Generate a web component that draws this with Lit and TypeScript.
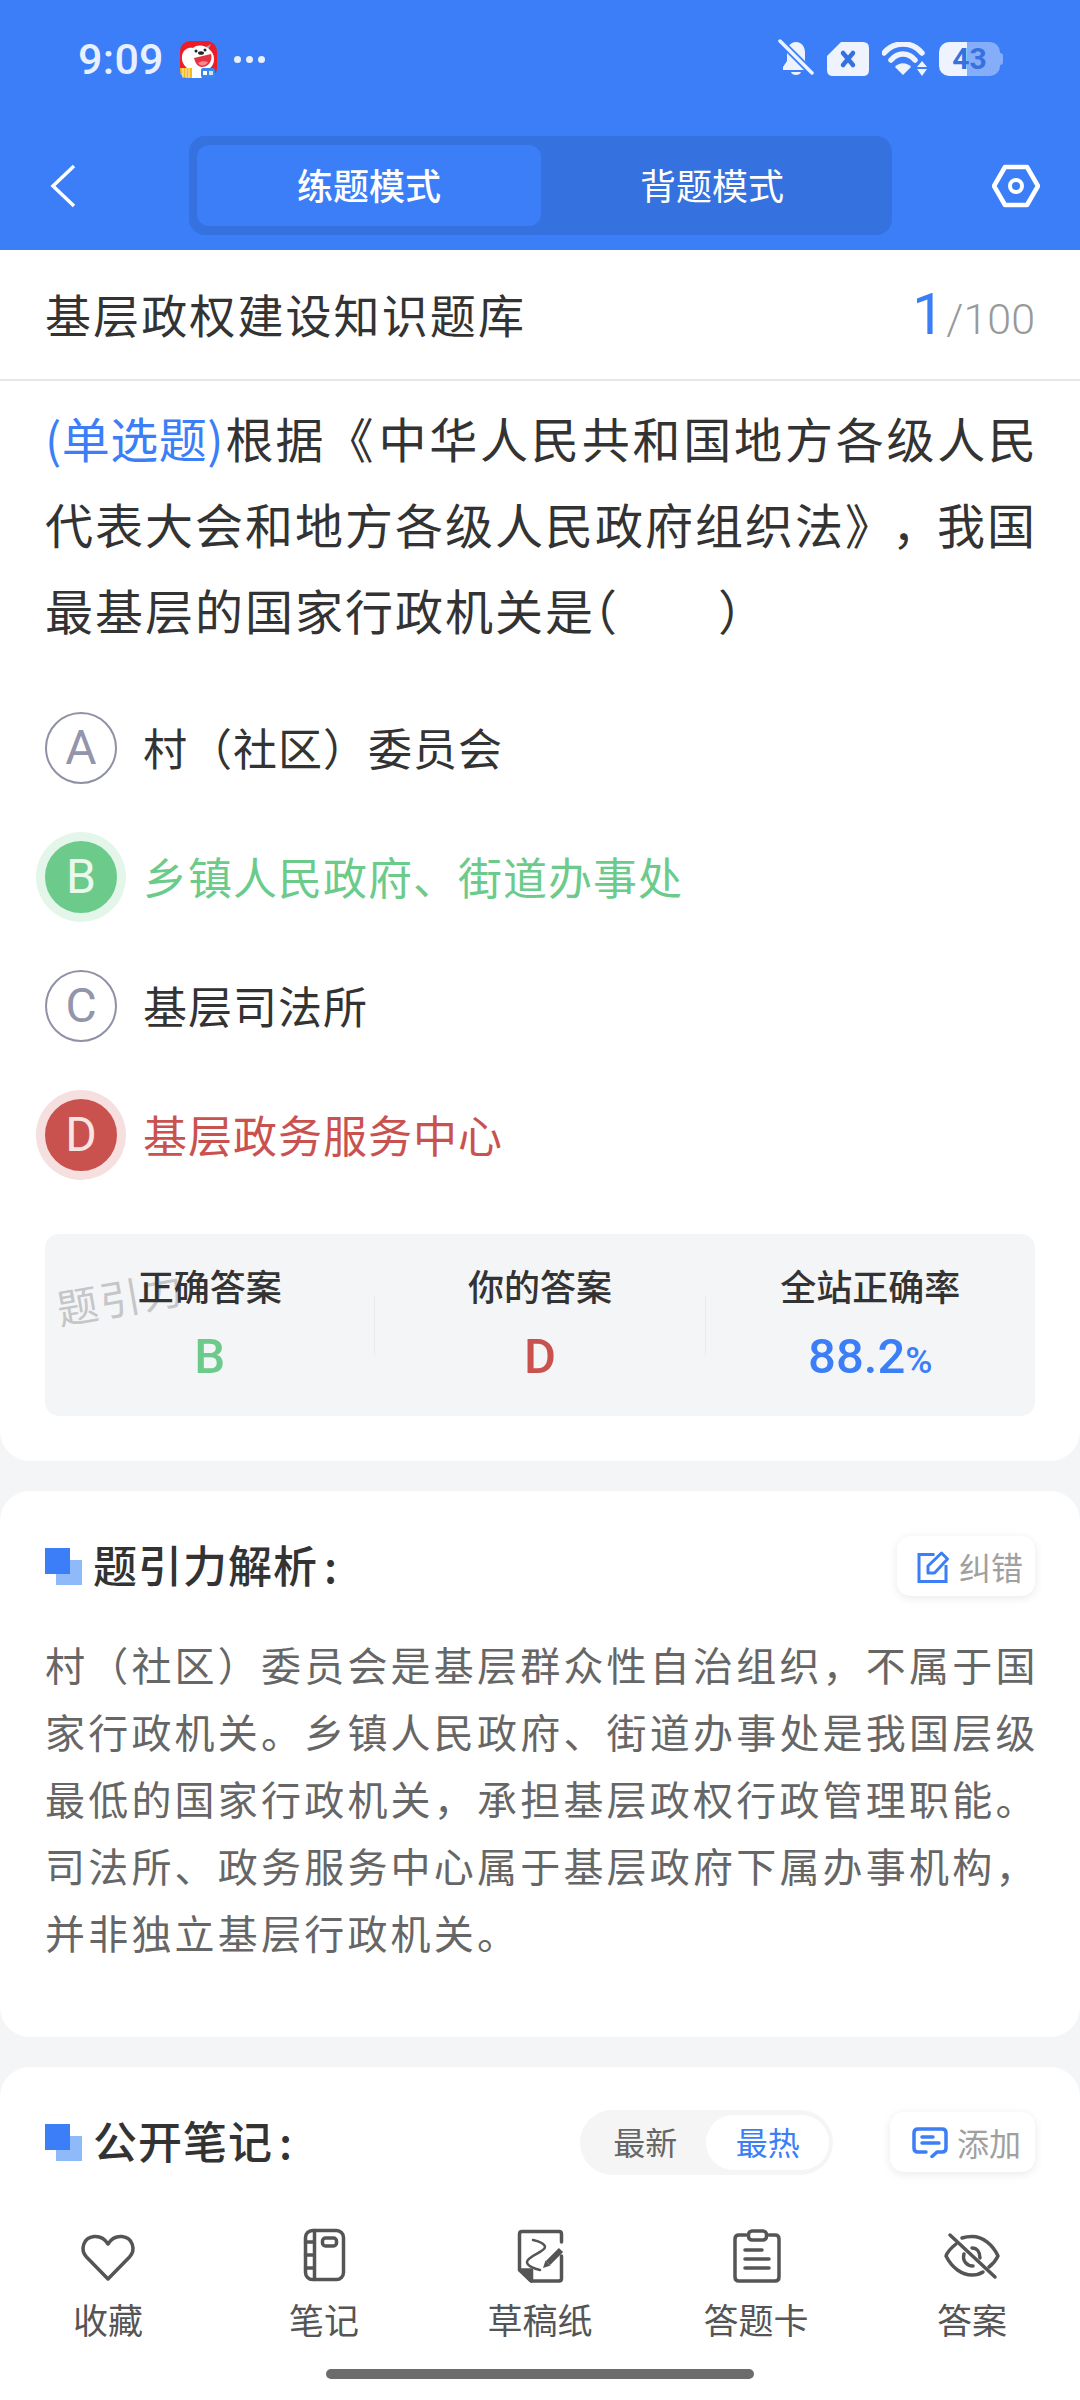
import { css, html, LitElement, svg } from "lit";
import { customElement } from "lit/decorators.js";

const options = [
	{ key: "A", text: "村（社区）委员会", state: "" },
	{ key: "B", text: "乡镇人民政府、街道办事处", state: "right" },
	{ key: "C", text: "基层司法所", state: "" },
	{ key: "D", text: "基层政务服务中心", state: "wrong" },
];

const tabIcons = {
	heart: svg`<path d="M30 51 8.5 29C2 22 5 9.5 16 8.5 22 8 27 11 30 16 33 11 38 8 44 8.5 55 9.5 58 22 51.5 29Z" />`,
	notebook: svg`
		<rect x="11.5" y="2.5" width="38" height="49" rx="7" />
		<path d="M20.5 2.5v49M11.5 14h9M11.5 27h9M11.5 40h9" />
		<rect x="28.5" y="10" width="14" height="8" rx="3" />
	`,
	draft: svg`
		<path d="M51.5 14V6Q51.5 3.5 49 3.5H12Q9.5 3.5 9.5 6V42L21 53H49Q51.5 53 51.5 50.5V28" />
		<path d="M10 42H21.5V53Z" fill="#555" />
		<path d="M23 12C29 13 35 16 35 19 35 24 17 28 17 34 17 38 25 41 30 42" stroke-width="2.5" />
		<path d="M38 35 51 22" stroke-width="6" stroke-linecap="butt" />
		<path d="M35.5 32.5 40.5 37.5 33 40Z" fill="#555" stroke="none" />
	`,
	card: svg`
		<path d="M20 7h-7q-4 0-4 4v38q0 4 4 4h36q4 0 4-4V11q0-4-4-4h-6" />
		<rect x="22.5" y="3" width="18" height="9" rx="3.5" />
		<path d="M19 22h17M19 31h24M19 40h24" />
	`,
	eye: svg`
		<path d="M14 16C9 20 5 25 4 28 10 40 20 47 30 47 34 47 38 46 41 44" />
		<path d="M20 10C23 9 26 8.5 30 8.5 41 8.5 51 17 56 28 54 32 51 36 47 39" />
		<path d="M22 26C20 33 25 38 31 38M30 20C35 20 38 24 38 30" />
		<path d="M8 7 53 49" />
	`,
};

const tabs = [
	{ icon: tabIcons.heart, label: "收藏" },
	{ icon: tabIcons.notebook, label: "笔记" },
	{ icon: tabIcons.draft, label: "草稿纸" },
	{ icon: tabIcons.card, label: "答题卡" },
	{ icon: tabIcons.eye, label: "答案" },
];

@customElement("app-root")
export class AppRoot extends LitElement {
	static override styles = css`
		:host {
			display: block;
			width: 1080px;
			height: 2400px;
			overflow: hidden;
			background: #f4f5f7;
			color: #333;
			font-family: "Noto Sans CJK SC", Roboto, sans-serif;
			text-spacing-trim: space-all;
		}

		.page {
			display: flex;
			flex-direction: column;
			height: 2400px;
		}

		.top {
			background: #3b7ef7;
			color: #fff;
			flex: none;
		}

		.status {
			display: flex;
			align-items: center;
			height: 118px;
			padding: 0 77px 0 78px;
			box-sizing: border-box;
		}

		.time {
			width: 102px;
			font: 500 43px/1 Roboto, sans-serif;
			letter-spacing: 0.3px;
			color: #e8effe;
		}

		.dots {
			display: flex;
			gap: 5px;
			margin-left: 17px;
		}

		.dots i {
			width: 7px;
			height: 7px;
			border-radius: 50%;
			background: #e8effe;
		}

		.status-right {
			display: flex;
			align-items: center;
			margin-left: auto;
			margin-right: -77px;
			padding-right: 77px;
		}

		.sim {
			margin-left: 13px;
		}

		.wifi {
			margin-left: 13px;
		}

		.battery {
			position: relative;
			display: flex;
			align-items: center;
			justify-content: center;
			width: 61px;
			height: 34px;
			margin-left: 12px;
			margin-right: 3px;
			border-radius: 10px;
			background: linear-gradient(90deg, #eef3fe 28px, #86adf9 28px);
			color: #3571df;
			font: 700 30px/1 Roboto, sans-serif;
		}

		.battery::after {
			content: "";
			position: absolute;
			right: -3px;
			top: 11px;
			width: 3px;
			height: 12px;
			border-radius: 0 3px 3px 0;
			background: #86adf9;
		}

		.nav {
			display: flex;
			align-items: center;
			height: 132px;
			padding: 3px 40px 0 50px;
			box-sizing: border-box;
		}

		.seg {
			display: flex;
			width: 703px;
			height: 99px;
			margin-left: 113px;
			padding: 9px 9px 9px 8px;
			box-sizing: border-box;
			border-radius: 16px;
			background: #3571df;
		}

		.seg div {
			flex: 1;
			display: flex;
			align-items: center;
			justify-content: center;
			padding-bottom: 3px;
			font-size: 36px;
			border-radius: 12px;
		}

		.seg .on {
			flex: none;
			width: 344px;
			box-sizing: border-box;
			background: #3b7ef7;
			font-weight: 500;
		}

		.hex {
			margin-left: auto;
		}

		.q-card,
		.card {
			background: #fff;
		}

		.q-card {
			flex: none;
			border-radius: 0 0 30px 30px;
			padding-bottom: 45px;
		}

		.title {
			display: flex;
			align-items: center;
			justify-content: space-between;
			height: 131px;
			padding: 0 45px;
			box-sizing: border-box;
			border-bottom: 2px solid #e6e6e6;
			font-size: 46px;
			letter-spacing: 2.1px;
		}

		.title-text {
			margin-top: -4px;
		}

		.count {
			display: flex;
			align-items: baseline;
			font: 300 43px/1 Roboto, sans-serif;
			letter-spacing: 0;
			color: #999;
		}

		.count b {
			margin-right: 2px;
			font-weight: 400;
			font-size: 57px;
			color: #3b7ef7;
		}

		.question {
			margin: 13px 0 0;
			padding: 0 45px;
			font-size: 48px;
			line-height: 86px;
			letter-spacing: 2px;
			white-space: nowrap;
		}

		.tag {
			margin-right: 1.5px;
			letter-spacing: 0.5px;
			color: #3b7ef7;
		}

		.open-book {
			margin-right: 3px;
		}

		.wide {
			letter-spacing: 2.8px;
		}

		/* the source font sets these two marks tighter than a full em */
		.close-book {
			letter-spacing: -1px;
		}

		.tight-comma {
			letter-spacing: -3px;
		}

		.before-paren {
			letter-spacing: -24px;
		}

		.blank {
			display: inline-block;
			width: 99px;
		}

		.options {
			display: flex;
			flex-direction: column;
			gap: 39px;
			margin-top: 51px;
			padding: 0 45px;
		}

		.option {
			display: flex;
			align-items: center;
			gap: 26px;
			height: 90px;
			font-size: 44px;
			letter-spacing: 1px;
		}

		.option-text {
			margin-top: -3px;
		}

		.mark {
			display: flex;
			align-items: center;
			justify-content: center;
			width: 72px;
			height: 72px;
			box-sizing: border-box;
			border: 2px solid #8f91a5;
			border-radius: 50%;
			color: #9395aa;
			font: 400 48px/1 Roboto, sans-serif;
			letter-spacing: 0;
		}

		.right {
			color: #6ccb8b;
		}

		.right .mark {
			background: #6ccb8b;
			border-color: #6ccb8b;
			color: #e9f9ee;
			box-shadow: 0 0 0 9px #e3f6e9;
		}

		.wrong {
			color: #c9524f;
		}

		.wrong .mark {
			background: #c9524f;
			border-color: #c9524f;
			color: #f9e4e4;
			box-shadow: 0 0 0 9px #f5dfdf;
		}

		.stats {
			position: relative;
			display: flex;
			align-items: flex-start;
			height: 182px;
			margin: 54px 45px 0;
			border-radius: 14px;
			background: #f4f5f7;
		}

		.watermark {
			position: absolute;
			left: 11px;
			top: 32px;
			font-size: 41px;
			letter-spacing: 2px;
			color: #c5c6c8;
			transform: rotate(-10deg);
		}

		.stat {
			position: relative;
			flex: 1;
			padding-top: 26px;
			text-align: center;
			font-size: 36px;
			line-height: 50px;
			font-weight: 500;
		}

		.stat strong {
			display: block;
			margin-top: 17px;
			font: 500 49px/60px Roboto, sans-serif;
		}

		.stat small {
			font-size: 37px;
		}

		.blue {
			color: #3b7ef7;
		}

		.rule {
			flex: none;
			width: 1px;
			height: 60px;
			margin-top: 61px;
			background: #e9eaec;
		}

		.card {
			flex: none;
			margin-top: 30px;
			border-radius: 30px 30px 0 0;
			padding: 45px 45px 0;
		}

		.card.solid {
			border-radius: 30px;
			padding-bottom: 71px;
		}

		.card.fill {
			flex: 1;
		}

		.head {
			display: flex;
			align-items: center;
			height: 60px;
		}

		.head h2 {
			margin: -4px 0 0 11px;
			font-size: 44px;
			font-weight: 500;
			letter-spacing: 1px;
		}

		.colon {
			margin-left: 6px;
		}

		.tool {
			display: flex;
			align-items: center;
			gap: 8px;
			height: 60px;
			margin-left: auto;
			padding: 0 12px 0 20px;
			border-radius: 14px;
			background: #fff;
			box-shadow: 0 2px 10px rgba(0, 0, 0, 0.09);
			font-size: 32px;
			color: #a0a0a0;
		}

		.explain {
			margin: 35px -8px 0 0;
			font-size: 40px;
			line-height: 67px;
			letter-spacing: 3.2px;
			color: #666;
		}

		.sort {
			display: flex;
			width: 253px;
			height: 65px;
			margin-left: auto;
			padding: 5px 4px;
			box-sizing: border-box;
			border-radius: 33px;
			background: #f5f5f5;
			font-size: 32px;
			color: #666;
		}

		.sort div {
			flex: 1;
			display: flex;
			align-items: center;
			justify-content: center;
			padding-bottom: 2px;
			border-radius: 28px;
		}

		.sort .on {
			background: #fff;
			color: #3b7ef7;
		}

		.sort + .tool {
			gap: 9px;
			margin-left: 57px;
			padding: 0 14px 0 22px;
		}

		.main {
			flex: 1;
			display: flex;
			flex-direction: column;
			min-height: 0;
		}

		.tabbar {
			position: relative;
			flex: none;
			height: 200px;
			margin-top: -100px;
			padding-top: 28px;
			box-sizing: border-box;
			background: #fff;
		}

		.tabs {
			display: grid;
			grid-template-columns: repeat(5, 216px);
		}

		.tab {
			display: flex;
			flex-direction: column;
			align-items: center;
			font-size: 35px;
			line-height: 50px;
			color: #555;
		}

		.tab svg {
			margin-bottom: 10px;
			fill: none;
			stroke: #555;
			stroke-width: 3.5;
			stroke-linecap: round;
			stroke-linejoin: round;
		}

		.home {
			width: 428px;
			height: 10px;
			margin: 25px auto 0;
			border-radius: 5px;
			background: #6c6c6c;
		}
	`;

	private squares() {
		return html`<svg width="37" height="37" viewBox="0 0 37 37">
			<rect x="11" y="12" width="26" height="25" fill="#8fbafa" />
			<rect width="25" height="26" fill="#3b7ef7" />
		</svg>`;
	}

	private appIcon() {
		return html`<svg width="37" height="37" viewBox="0 0 37 37">
			<rect width="37" height="37" rx="10" fill="#ee1c25" />
			<path d="M31 3 28 9 24 7Z" fill="#9aa3b5" />
			<path d="M2 15C3 8 9 6 13 7 17 3 26 4 30 9 35 13 35 21 32 25 29 29 24 30 20 29H12C6 28 1 22 2 15Z" fill="#fff" />
			<path d="M14 17 31 13C33 20 28 26 22 26 18 26 15 22 14 17Z" fill="#e33240" />
			<path d="M18 22C21 20 25 20 28 21 26 25 21 26 18 22Z" fill="#f58a95" />
			<circle cx="16" cy="10" r="1.5" fill="#222" />
			<circle cx="25" cy="9" r="1.5" fill="#222" />
			<ellipse cx="21" cy="12" rx="3" ry="1.8" fill="#222" />
			<path d="M0 27H12V37H8Q0 37 0 29Z" fill="#f9b81c" />
			<path d="M3 27V37M6 27V37M9 27V37" stroke="#fff" stroke-width="0.8" />
			<rect x="12" y="27" width="10" height="10" fill="#fff" />
			<rect x="21" y="27" width="14" height="10" rx="2" fill="#3a88e8" />
			<rect x="23" y="30" width="4" height="4" fill="#fff" />
			<rect x="29" y="30" width="4" height="4" fill="#cfe2fb" />
		</svg>`;
	}

	private statusIcons() {
		return html`
			<svg width="36" height="40" viewBox="0 0 36 40">
				<path d="M18 3C24 3 27 8 27 14V22L31 28V31H5V28L9 22V14C9 8 12 3 18 3Z" fill="#eef3fe" />
				<path d="M13 33H23C22 37 14 37 13 33Z" fill="#eef3fe" />
				<path d="M1 1 35 35" stroke="#3b7ef7" stroke-width="7" />
				<path d="M2 2 34 34" stroke="#eef3fe" stroke-width="3.5" stroke-linecap="round" />
			</svg>
			<svg class="sim" width="42" height="34" viewBox="0 0 42 34">
				<path d="M14 0H36Q42 0 42 6V28Q42 34 36 34H6Q0 34 0 28V14Z" fill="#eef3fe" />
				<path d="M16 11 26 23M26 11 16 23" stroke="#3571df" stroke-width="4.5" stroke-linecap="round" />
			</svg>
			<svg class="wifi" width="45" height="34" viewBox="0 0 45 34">
				<path d="M2 11C12 -1 30 -1 40 11" fill="none" stroke="#eef3fe" stroke-width="5.5" stroke-linecap="round" />
				<path d="M9 18C16 10 26 10 33 18" fill="none" stroke="#eef3fe" stroke-width="5.5" stroke-linecap="round" />
				<path d="M13 25C17 20 25 20 29 25L21 33Z" fill="#eef3fe" />
				<path d="M40 19 45 25H35ZM35 27H45L40 34Z" fill="#eef3fe" />
			</svg>
			<div class="battery">43</div>
		`;
	}

	override render() {
		return html`
			<div class="page">
				<div class="top">
					<div class="status">
						<span class="time">9:09</span>
						${this.appIcon()}
						<span class="dots"><i></i><i></i><i></i></span>
						<div class="status-right">${this.statusIcons()}</div>
					</div>
					<div class="nav">
						<svg width="26" height="44" viewBox="0 0 26 44">
							<path d="M24 2 3 22 24 42" fill="none" stroke="#fff" stroke-width="3.5" />
						</svg>
						<div class="seg">
							<div class="on">练题模式</div>
							<div>背题模式</div>
						</div>
						<svg class="hex" width="48" height="44" viewBox="0 0 48 44">
							<path d="M13 3H35L46 22 35 41H13L2 22Z" fill="none" stroke="#fff" stroke-width="4.5" stroke-linejoin="round" />
							<circle cx="24" cy="22" r="6" fill="none" stroke="#fff" stroke-width="4" />
						</svg>
					</div>
				</div>

				<div class="main">
					<section class="q-card">
						<div class="title">
							<span class="title-text">基层政权建设知识题库</span>
							<span class="count"><b>1</b>/100</span>
						</div>
						<p class="question">
							<span class="tag">(单选题)</span>根据<span class="open-book">《</span><span class="wide">中华人民共和国地方各级人民</span><br />
							代表大会和地方各级人民政府组织法<span class="close-book">》</span><span class="tight-comma">，</span>我国<br />
							最基层的国家行政机关<span class="before-paren">是</span>（<span class="blank"></span>）
						</p>
						<div class="options">
							${options.map(
								(o) => html`<div class="option ${o.state}">
									<span class="mark">${o.key}</span>
									<span class="option-text">${o.text}</span>
								</div>`,
							)}
						</div>
						<div class="stats">
							<span class="watermark">题引力</span>
							<div class="stat">正确答案<strong class="right">B</strong></div>
							<i class="rule"></i>
							<div class="stat">你的答案<strong class="wrong">D</strong></div>
							<i class="rule"></i>
							<div class="stat">全站正确率<strong class="blue">88.2<small>%</small></strong></div>
						</div>
					</section>

					<section class="card solid">
						<div class="head">
							${this.squares()}
							<h2>题引力解析<span class="colon">:</span></h2>
							<div class="tool">
								<svg width="34" height="33" viewBox="0 0 33 33" fill="none" stroke="#3b7ef7" stroke-width="3">
									<path d="M17 4.5H1.5V31.5H28.5V15" />
									<path d="M10.5 23V16L24 3 30 9 17 23Z" stroke-linejoin="round" />
								</svg>
								纠错
							</div>
						</div>
						<p class="explain">
							村（社区）委员会是基层群众性自治组织，不属于国家行政机关。乡镇人民政府、街道办事处是我国层级最低的国家行政机关，承担基层政权行政管理职能。司法所、政务服务中心属于基层政府下属办事机构，并非独立基层行政机关。
						</p>
					</section>

					<section class="card fill">
						<div class="head">
							${this.squares()}
							<h2>公开笔记<span class="colon">:</span></h2>
							<div class="sort">
								<div>最新</div>
								<div class="on">最热</div>
							</div>
							<div class="tool">
								<svg width="36" height="31" viewBox="0 0 36 31" fill="none" stroke="#3b7ef7" stroke-width="3.5" stroke-linecap="round">
									<path d="M14 25H6Q2 25 2 21V6Q2 2 6 2H30Q34 2 34 6V21Q34 25 30 25H25L20 29.5" stroke-linejoin="round" />
									<path d="M10 10H21M10 16H27" />
								</svg>
								添加
							</div>
						</div>
					</section>
				</div>

				<nav class="tabbar">
					<div class="tabs">
						${tabs.map(
							(t) => html`<div class="tab">
								<svg width="60" height="56" viewBox="0 0 60 56">${t.icon}</svg>
								${t.label}
							</div>`,
						)}
					</div>
					<div class="home"></div>
				</nav>
			</div>
		`;
	}
}
